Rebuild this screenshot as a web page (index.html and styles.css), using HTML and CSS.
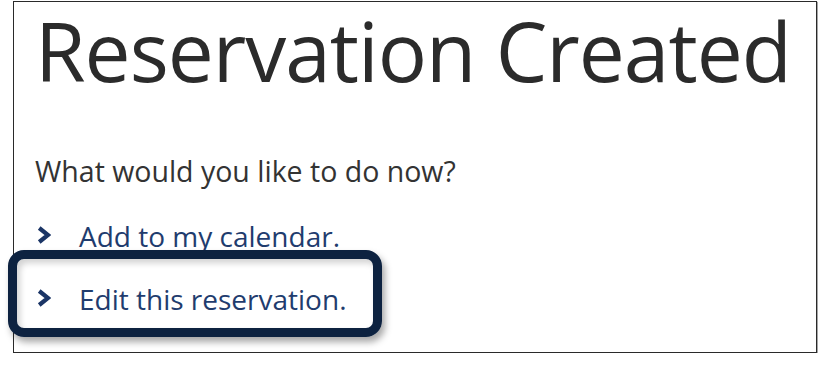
FILE: index.html
```html
<!DOCTYPE html>
<html lang="en">
<head>
<meta charset="utf-8">
<title>Reservation Created</title>
<link rel="stylesheet" href="styles.css">
</head>
<body>
<main class="frame">
  <h1 class="title">Reservation Created</h1>
  <p class="prompt">What would you like to do now?</p>
  <ul class="actions">
    <li class="action">
      <svg class="chev" viewBox="0 0 14 18" aria-hidden="true"><path d="M2.2 2 L11 9 L2.2 16" /></svg>
      <a href="#" class="action-link">Add to my calendar.</a>
    </li>
    <li class="action action-highlight">
      <svg class="chev" viewBox="0 0 14 18" aria-hidden="true"><path d="M2.2 2 L11 9 L2.2 16" /></svg>
      <a href="#" class="action-link">Edit this reservation.</a>
    </li>
  </ul>
</main>
</body>
</html>
```
FILE: styles.css
```css
html, body {
  margin: 0;
  padding: 0;
  background: #ffffff;
}
body {
  font-family: "Open Sans", "Noto Sans", sans-serif;
  color: #333333;
}
.frame {
  position: relative;
  box-sizing: border-box;
  margin: 1px 0 0 13px;
  width: 804px;
  height: 352px;
  border: 1px solid #2a2a2a;
  box-shadow: 1px 1px 1px rgba(0,0,0,0.35);
  padding: 0 0 0 21px;
}
.title {
  margin: -8px 0 0 0;
  font-weight: 400;
  font-size: 82px;
  line-height: 112px;
  letter-spacing: -1px;
  white-space: nowrap;
  color: #2b2b2b;
}
.prompt {
  margin: 47px 0 0 0;
  font-size: 28.5px;
  line-height: 36px;
  color: #333333;
  white-space: nowrap;
}
.actions {
  list-style: none;
  margin: 15px 0 0 0;
  padding: 0;
}
.action {
  position: relative;
  display: flex;
  align-items: center;
  gap: 28px;
  height: 63px;
  padding-left: 2px;
}
.chev {
  width: 14px;
  height: 18px;
  flex: none;
  margin-bottom: 1px;
}
.chev path {
  fill: none;
  stroke: #1b3566;
  stroke-width: 4.2;
  stroke-linecap: butt;
  stroke-linejoin: miter;
}
.action-link {
  font-size: 28px;
  line-height: 36px;
  color: #1f3c6e;
  text-decoration: none;
  white-space: nowrap;
}
.action-highlight::before {
  content: "";
  position: absolute;
  left: -27px;
  top: -17px;
  width: 374px;
  height: 87px;
  box-sizing: border-box;
  border: 9px solid #0d2240;
  border-radius: 16px;
  box-shadow: 3px 5px 7px rgba(0,0,0,0.35), inset 3px 4px 6px rgba(0,0,0,0.18);
  pointer-events: none;
}
```
